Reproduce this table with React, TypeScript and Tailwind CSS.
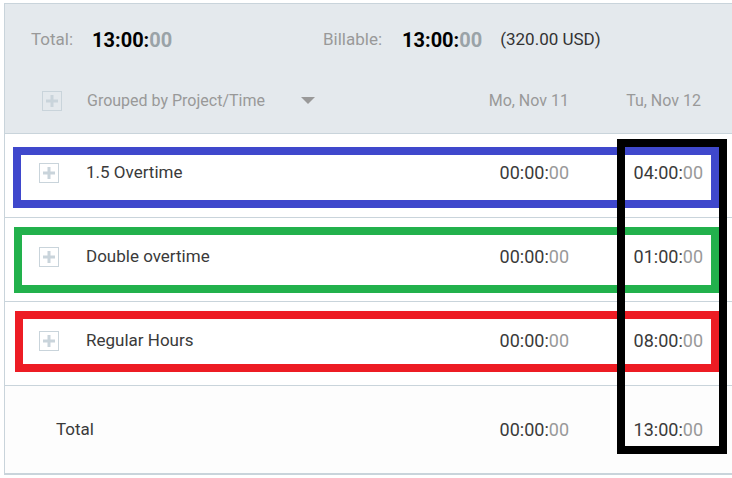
import React from "react";

function PlusBox() {
  return (
    <div className="w-[20px] h-[20px] border border-[#c9d4db] flex items-center justify-center shrink-0">
      <svg width="14" height="14" viewBox="0 0 14 14">
        <rect x="5.5" y="1" width="3" height="12" fill="#c9d4db" />
        <rect x="1" y="5.5" width="12" height="3" fill="#c9d4db" />
      </svg>
    </div>
  );
}

function Time({ h, bold }: { h: string; bold?: boolean }) {
  return (
    <span className={bold ? "text-[20px] font-bold text-black" : "text-[18px] text-[#3a3a3a]"}>
      {h}
      <span className={bold ? "text-[#9aa3a8]" : "text-[#999]"}>00</span>
    </span>
  );
}

function Row({ label, t1, t2 }: { label: string; t1: string; t2: string }) {
  return (
    <div className="h-[84px] border-b border-[#c9d4db] flex items-center pb-[6px] bg-white">
      <div className="w-[54px] pl-[34px] flex">
        <PlusBox />
      </div>
      <div className="flex-1 pl-[27px] text-[17px] text-[#3a3a3a]">{label}</div>
      <div className="w-[134px] text-right">
        <Time h={t1} />
      </div>
      <div className="w-[163px] text-right pr-[29px]">
        <Time h={t2} />
      </div>
    </div>
  );
}

export default function App() {
  return (
    <div className="relative w-[732px] h-[478px] bg-white" style={{ fontFamily: "Roboto, 'Liberation Sans', sans-serif" }}>
      <div className="absolute left-[4px] top-[3px] w-[728px] border border-[#c9d4db] border-r-0">
        <div className="bg-[#e4e9ed] border-b border-[#c9d4db] pb-[7px]">
          <div className="h-[72px] flex items-center pl-[26px]">
            <div className="w-[292px] flex items-center">
              <span className="text-[17px] text-[#999]">Total:</span>
              <span className="ml-[19px]">
                <Time h="13:00:" bold />
              </span>
            </div>
            <span className="text-[17px] text-[#999]">Billable:</span>
            <span className="ml-[20px]">
              <Time h="13:00:" bold />
            </span>
            <span className="ml-[18px] text-[17px] text-[#333]">(320.00 USD)</span>
          </div>
          <div className="h-[50px] flex items-center">
            <div className="pl-[37px] flex">
              <PlusBox />
            </div>
            <div className="pl-[25px] w-[239px] text-[16px] text-[#999]">Grouped by Project/Time</div>
            <svg width="14" height="7" viewBox="0 0 14 7" className="mt-[-2px]">
              <polygon points="0,0 14,0 7,7" fill="#999" />
            </svg>
            <div className="flex-1" />
            <div className="w-[134px] text-right text-[16px] text-[#999]">Mo, Nov 11</div>
            <div className="w-[163px] text-right pr-[31px] text-[16px] text-[#999]">Tu, Nov 12</div>
          </div>
        </div>
        <Row label="1.5 Overtime" t1="00:00:" t2="04:00:" />
        <Row label="Double overtime" t1="00:00:" t2="01:00:" />
        <Row label="Regular Hours" t1="00:00:" t2="08:00:" />
        <div className="h-[88px] border-b border-[#c9d4db] flex items-center bg-[#fdfdfd]">
          <div className="flex-1 pl-[51px] text-[17px] text-[#3a3a3a]">Total</div>
          <div className="w-[134px] text-right">
            <Time h="00:00:" />
          </div>
          <div className="w-[163px] text-right pr-[29px]">
            <Time h="13:00:" />
          </div>
        </div>
      </div>

      <div className="absolute left-[13px] top-[147px] w-[706px] h-[61px] border-[8px] border-[#3f48cc]" />
      <div className="absolute left-[14px] top-[227px] w-[705px] h-[66px] border-[8px] border-[#22b14c]" />
      <div className="absolute left-[15px] top-[311px] w-[704px] h-[61px] border-[8px] border-[#ed1c24]" />
      <div className="absolute left-[617px] top-[139px] w-[110px] h-[315px] border-[8px] border-black" />
    </div>
  );
}
